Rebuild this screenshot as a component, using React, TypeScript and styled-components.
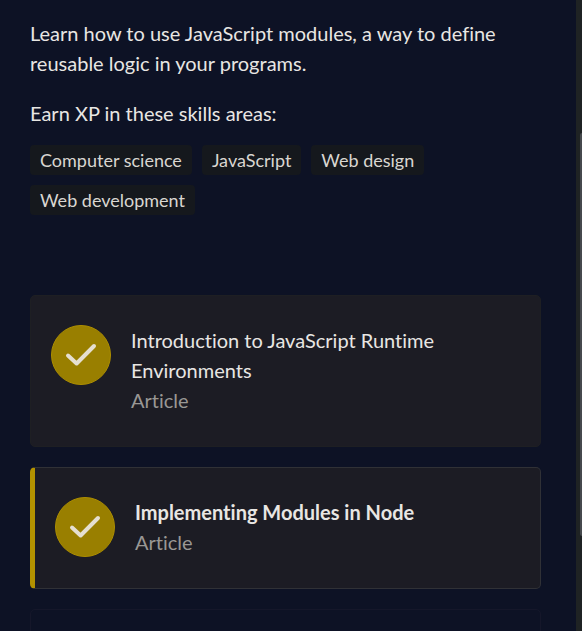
import React from "react";
import styled, { createGlobalStyle } from "styled-components";

const GlobalStyle = createGlobalStyle`
  *, *::before, *::after { box-sizing: border-box; }
  body {
    margin: 0;
    background: #0d1225;
    color: #e8e6e3;
    font-family: Lato, "Open Sans", sans-serif;
    font-size: 20px;
    font-variant-ligatures: none;
    line-height: 30px;
  }
`;

const Page = styled.div`
  display: flex;
  height: 100vh;
  overflow: hidden;
`;

const Content = styled.main`
  flex: 1;
  min-width: 0;
  padding: 18px 35px 0 30px;
`;

const ScrollTrack = styled.div`
  width: 6px;
  flex: none;
  display: flex;
  flex-direction: column;
  align-items: flex-end;
  padding-top: 21vh;
  background: #1f2324;
`;

const ScrollThumb = styled.div`
  width: 2px;
  height: 64vh;
  border-radius: 2px 0 0 2px;
  background: #46494d;
`;

const Text = styled.p`
  margin: 0 0 20px;
`;

const SkillsLabel = styled.h2`
  margin: 0 0 17px;
  font-size: 20px;
  font-weight: 400;
`;

const SkillList = styled.ul`
  display: flex;
  flex-wrap: wrap;
  gap: 10px;
  margin: 0 0 80px;
  padding: 0;
  list-style: none;
`;

const Skill = styled.li`
  padding: 0 10px;
  border-radius: 4px;
  background: #15181d;
  color: #d9d6d1;
  font-size: 18px;
`;

const Lessons = styled.div`
  display: flex;
  flex-direction: column;
  gap: 20px;
`;

const LessonCard = styled.a<{ $state: "done" | "current" | "upcoming" }>`
  display: flex;
  align-items: flex-start;
  gap: 20px;
  min-height: 122px;
  padding: 29px 20px 31px;
  border: 1px solid
    ${({ $state }) =>
      $state === "current" ? "#303136" : $state === "done" ? "#1e1f23" : "#15172a"};
  border-left: ${({ $state }) => ($state === "current" ? "5px solid #b39200" : "")};
  border-radius: 5px;
  background: ${({ $state }) => ($state === "upcoming" ? "transparent" : "#1c1c24")};
  color: inherit;
  text-decoration: none;
`;

const Badge = styled.span`
  display: flex;
  flex: none;
  align-items: center;
  justify-content: center;
  width: 60px;
  height: 60px;
  border: 1px solid #ad8e00;
  border-radius: 50%;
  background: #997f00;
  color: #e5dfd0;
`;

const LessonText = styled.span`
  display: flex;
  flex-direction: column;
  min-width: 0;
`;

const LessonTitle = styled.span<{ $strong: boolean }>`
  font-weight: ${({ $strong }) => ($strong ? 700 : 400)};
`;

const LessonKind = styled.span`
  color: #999794;
`;

const skills = ["Computer science", "JavaScript", "Web design", "Web development"];

const lessons = [
  { title: "Introduction to JavaScript Runtime Environments", state: "done" as const },
  { title: "Implementing Modules in Node", state: "current" as const },
];

function CheckIcon() {
  return (
    <svg width="32" height="24" viewBox="0 0 32 24" fill="none" aria-hidden="true">
      <path
        d="M3 12.5 11.6 20.5 29 3"
        stroke="currentColor"
        strokeWidth="4"
        strokeLinecap="round"
        strokeLinejoin="round"
      />
    </svg>
  );
}

export default function App() {
  return (
    <>
      <GlobalStyle />
      <Page>
        <Content>
          <Text>
            Learn how to use JavaScript modules, a way to define reusable logic in your programs.
          </Text>
          <SkillsLabel>Earn XP in these skills areas:</SkillsLabel>
          <SkillList>
            {skills.map((skill) => (
              <Skill key={skill}>{skill}</Skill>
            ))}
          </SkillList>
          <Lessons>
            {lessons.map(({ title, state }) => (
              <LessonCard key={title} href="#" $state={state}>
                <Badge>
                  <CheckIcon />
                </Badge>
                <LessonText>
                  <LessonTitle $strong={state === "current"}>{title}</LessonTitle>
                  <LessonKind>Article</LessonKind>
                </LessonText>
              </LessonCard>
            ))}
            <LessonCard as="div" $state="upcoming" />
          </Lessons>
        </Content>
        <ScrollTrack aria-hidden="true">
          <ScrollThumb />
        </ScrollTrack>
      </Page>
    </>
  );
}
